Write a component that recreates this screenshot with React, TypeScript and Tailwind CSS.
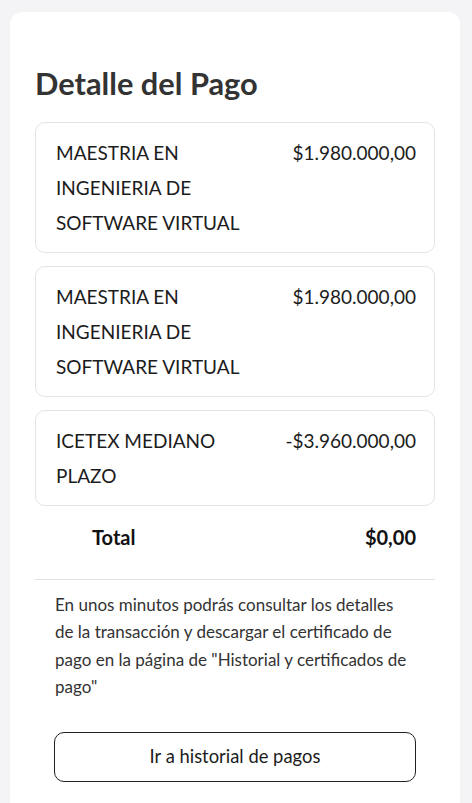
import React from "react";

const items = [
  { name: "MAESTRIA EN INGENIERIA DE SOFTWARE VIRTUAL", amount: "$1.980.000,00" },
  { name: "MAESTRIA EN INGENIERIA DE SOFTWARE VIRTUAL", amount: "$1.980.000,00" },
  { name: "ICETEX MEDIANO PLAZO", amount: "-$3.960.000,00" },
];

export default function App() {
  return (
    <div
      className="min-h-[803px] bg-[#f4f4f6] pt-[12px]"
      style={{ fontFamily: "Lato, 'Noto Sans', sans-serif" }}
    >
      <div className="ml-[10px] w-[450px] rounded-[12px] bg-white px-[25px] pt-[54px] pb-[60px]">
        <h1 className="text-[30.8px] font-bold leading-[36px] text-[#333333]">
          Detalle del Pago
        </h1>
        <div className="mt-[20px] flex flex-col gap-[13px]">
          {items.map((it, i) => (
            <div
              key={i}
              className="flex justify-between rounded-[10px] border border-[#e4e4e4] pl-[20px] pr-[18px] py-[12px] text-[19px] leading-[35px] text-[#1c1c1c]"
            >
              <div className="w-[200px]">{it.name}</div>
              <div className="whitespace-nowrap">{it.amount}</div>
            </div>
          ))}
        </div>
        <div className="mt-[16px] flex h-[30px] items-center justify-between pl-[57px] pr-[19px] text-[20px] font-bold text-[#111111]">
          <span>Total</span>
          <span>$0,00</span>
        </div>
        <div className="mt-[27px] border-t border-[#e2e2e2]" />
        <p className="pl-[20px] pr-[24px] pt-[11px] text-[17px] leading-[27.3px] text-[#333333]">
          En unos minutos podrás consultar los detalles de la transacción y descargar el certificado de pago en la página de "Historial y certificados de pago"
        </p>
        <div className="px-[19px] pt-[32px]">
          <button className="flex h-[50px] w-full items-center justify-center rounded-[10px] border border-[#222222] bg-white text-[18.4px] text-[#1c1c1c]">
            Ir a historial de pagos
          </button>
        </div>
      </div>
    </div>
  );
}
